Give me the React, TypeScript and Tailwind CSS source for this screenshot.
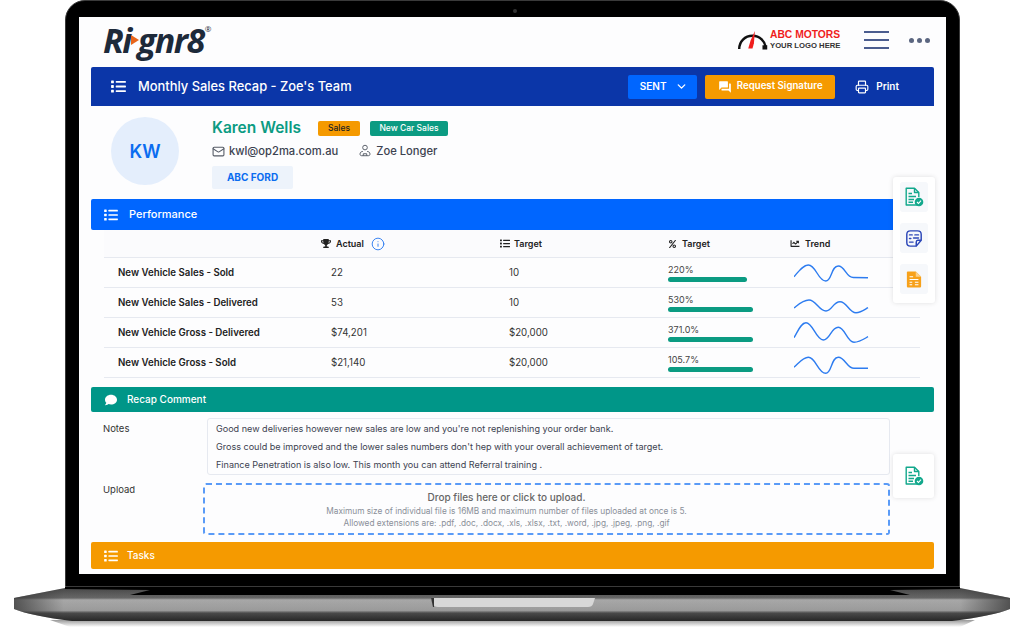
import { ChevronDown, Info, Mail, Printer } from "lucide-react";
import { FaChartLine, FaComment, FaPercent, FaTrophy } from "react-icons/fa";
import { MdForum } from "react-icons/md";

const rows = [
  {
    name: "New Vehicle Sales - Sold",
    actual: "22",
    target: "10",
    pct: "220%",
    bar: "w-[79px]",
    line: "M0 18.7C5 13 9 7 14.3 7C22 7 24 23 31.7 23C38 23 37 8 44.3 8C51 8 52 19.3 59.3 19.5L74 19.7",
  },
  {
    name: "New Vehicle Sales - Delivered",
    actual: "53",
    target: "10",
    pct: "530%",
    bar: "w-[85px]",
    line: "M0 20C5 16 9 12 15 12C22 12 25 23 32 23C38 23 39 13.7 46 13.7C53 13.7 55 24.7 62 24.7C67 24.7 70 22 74 19.7",
  },
  {
    name: "New Vehicle Gross - Delivered",
    actual: "$74,201",
    target: "$20,000",
    pct: "371.0%",
    bar: "w-[85px]",
    line: "M0 19.7C4 13 7 4.7 12 4.7C19 4.7 22 22 29.3 22C36 22 37 9.3 44.3 9.3C51 9.3 53 24.3 60 24.3C65 24.3 70 21 74 18.7",
  },
  {
    name: "New Vehicle Gross - Sold",
    actual: "$21,140",
    target: "$20,000",
    pct: "105.7%",
    bar: "w-[85px]",
    line: "M0 19.3C5 15 9 9.3 14.3 9.3C22 9.3 24 25.3 31.7 25.3C38 25.3 37 9.3 44.3 9.3C51 9.3 53 20.3 60 20.3L74 20.3",
  },
];

function ListIcon({ className }: { className?: string }) {
  return (
    <svg viewBox="0 0 16 14" className={className} fill="currentColor">
      <rect x="0" y="0.5" width="3" height="3" rx="0.6" />
      <rect x="0" y="5.5" width="3" height="3" rx="0.6" />
      <rect x="0" y="10.5" width="3" height="3" rx="0.6" />
      <rect x="5" y="1" width="11" height="2" rx="0.5" />
      <rect x="5" y="6" width="11" height="2" rx="0.5" />
      <rect x="5" y="11" width="11" height="2" rx="0.5" />
    </svg>
  );
}

function DocCheck({ className }: { className?: string }) {
  return (
    <svg viewBox="0 0 20 20" className={className} fill="none" stroke="#12a88c" strokeWidth="1.4">
      <path d="M13 15.5V18H2.2V1.2H10.5L14.8 5.5V10" strokeLinejoin="round" />
      <path d="M10.5 1.2V5.5H14.8" strokeLinejoin="round" />
      <path d="M4.5 6.5H8M4.5 9.5H12M4.5 12.5H10M4.5 15.3H9" />
      <circle cx="15" cy="15" r="4.3" fill="#12a88c" stroke="none" />
      <path d="M13 15L14.5 16.5L17 13.7" stroke="#fff" strokeWidth="1.1" />
    </svg>
  );
}

function NoteIcon() {
  return (
    <svg viewBox="0 0 20 20" className="h-[19px] w-[18px]" fill="none" stroke="#2b46b8" strokeWidth="1.6">
      <path d="M18 12V5.5C18 2.8 16.7 1.5 14 1.5H6C3.3 1.5 2 2.8 2 5.5V14.5C2 17.2 3.3 18.5 6 18.5H12.5L18 12Z" strokeLinejoin="round" />
      <path d="M12.5 18.5V14C12.5 12.8 13 12 14.2 12H18" />
      <path d="M5 6H8M11 6H15M5 10H6.5M9.5 9.5H15M5 14H9" strokeLinecap="round" />
    </svg>
  );
}

function OrangeDoc() {
  return (
    <svg viewBox="0 0 18 20" className="h-[19px] w-[16px]">
      <path d="M2 1H11L17 7V17.5C17 18.5 16.3 19 15.5 19H2.5C1.5 19 1 18.5 1 17.5V2C1 1.3 1.3 1 2 1Z" fill="#f7a11a" />
      <path d="M11 1V7H17Z" fill="#fcd08a" />
      <path d="M4 7H8M4 10H14M4 13H7M10 13H14M4 16H7M10 16H14" stroke="#fff" strokeWidth="1.2" />
    </svg>
  );
}

function ManagerIcon() {
  return (
    <svg viewBox="0 0 14 16" className="h-[14px] w-[12px]" fill="none" stroke="#555b66" strokeWidth="1.1">
      <circle cx="7" cy="4" r="2.7" />
      <path d="M4.5 8.5C2.5 8.5 1.2 9.8 1.2 11.5C1.2 13 2 13.5 3 13.5H11C12 13.5 12.8 13 12.8 11.5C12.8 9.8 11.5 8.5 9.5 8.5" />
      <path d="M5 13.5V11.2H9V13.5" />
    </svg>
  );
}

function SectionBar({
  color,
  icon,
  title,
  h,
  titleClass,
}: {
  color: string;
  icon: React.ReactNode;
  title: string;
  h: string;
  titleClass: string;
}) {
  return (
    <div className={`flex items-center rounded-[2px] pl-[13px] text-white ${color} ${h}`}>
      {icon}
      <span className={`font-medium ${titleClass}`}>{title}</span>
    </div>
  );
}

function LaptopBase() {
  return (
    <svg viewBox="0 0 1024 43" className="h-[43px] w-[1024px] shrink-0">
      <defs>
        <linearGradient id="body" x1="0" y1="0" x2="0" y2="1">
          <stop offset="0" stopColor="#4a4a4a" />
          <stop offset="0.3" stopColor="#6c6c6c" />
          <stop offset="0.36" stopColor="#b4b4b4" />
          <stop offset="0.68" stopColor="#a6a6a6" />
          <stop offset="0.76" stopColor="#4c4c4c" />
          <stop offset="1" stopColor="#262626" />
        </linearGradient>
        <linearGradient id="ends" x1="0" y1="0" x2="1" y2="0">
          <stop offset="0" stopColor="#333" stopOpacity="0.75" />
          <stop offset="0.05" stopColor="#333" stopOpacity="0.1" />
          <stop offset="0.95" stopColor="#333" stopOpacity="0.1" />
          <stop offset="1" stopColor="#333" stopOpacity="0.75" />
        </linearGradient>
        <linearGradient id="shadow" x1="0" y1="0" x2="0" y2="1">
          <stop offset="0" stopColor="#999" />
          <stop offset="1" stopColor="#fff" />
        </linearGradient>
      </defs>
      <path d="M50 33H975L960 40H70Z" fill="url(#shadow)" />
      <path d="M65 1L14 11V22Q32 29 72 34H952Q992 29 1010 22V11L960 1Z" fill="url(#body)" />
      <path d="M65 1L14 11V22Q32 29 72 34H952Q992 29 1010 22V11L960 1Z" fill="url(#ends)" />
      <path d="M65 0H960V2L890 3L910 8H130L150 3L65 2Z" fill="#000" />
      <path d="M431 11H595L593 17Q592 20 588 20H438Q434 20 433 17Z" fill="#d8d8d8" />
      <path d="M431 11H434V20H433Z" fill="#333" />
    </svg>
  );
}

export default function App() {
  return (
    <div className="flex h-[629px] w-[1024px] flex-col overflow-hidden bg-white font-['Inter',sans-serif]">
      <div className="relative ml-[65px] h-[587px] w-[895px] shrink-0 rounded-t-[20px] border border-[#3a3a3a] bg-black px-[13px] pt-[16px]">
        <div className="absolute left-[447px] top-[8px] h-[4px] w-[4px] rounded-full bg-[#333]" />
        <div className="relative h-[557px] w-[867px] bg-[#fdfdfe] px-[12px]">
          {/* top header */}
          <div className="flex h-[50px] items-center justify-between pb-[4px]">
            <div className="relative ml-[12px] flex items-start font-['Open_Sans',sans-serif] text-[34px] font-bold italic leading-none tracking-[-1.5px] text-[#1d2a3a]">
              <span>Ri</span>
              <span className="mt-[12px] h-0 w-0 border-y-[5px] border-l-[8px] border-y-transparent border-l-[#e8651a]" />
              <span className="-ml-[1px]">gnr8</span>
              <span className="ml-[1px] mt-[2px] text-[8px] font-normal not-italic">®</span>
            </div>
            <div className="flex items-center">
              <svg viewBox="0 0 32 20" className="h-[19px] w-[31px]">
                <path d="M2 19C2 11 8 5 16 5C24 5 29 11 30 17" fill="none" stroke="#111" strokeWidth="2.6" />
                <rect x="26.5" y="15" width="5" height="4.5" fill="#111" />
                <path d="M18.5 0L17.5 13L16 18.5L11.5 18.5L14 10Z" fill="#f01d1d" />
              </svg>
              <div className="ml-[2px] flex w-[73px] flex-col whitespace-nowrap font-['Liberation_Sans',sans-serif] font-bold leading-[11px]">
                <span className="text-[10.3px] text-[#f01d1d]">ABC MOTORS</span>
                <span className="text-[7.7px] text-[#333]">YOUR LOGO HERE</span>
              </div>
              <div className="ml-[21px] flex h-[18px] w-[25px] flex-col justify-between">
                <div className="h-[2px] bg-[#4b5d8f]" />
                <div className="h-[2px] bg-[#4b5d8f]" />
                <div className="h-[2px] bg-[#4b5d8f]" />
              </div>
              <div className="ml-[20px] mr-[4px] flex gap-[3px]">
                <div className="h-[5px] w-[5px] rounded-full bg-[#5b6680]" />
                <div className="h-[5px] w-[5px] rounded-full bg-[#5b6680]" />
                <div className="h-[5px] w-[5px] rounded-full bg-[#5b6680]" />
              </div>
            </div>
          </div>

          {/* title bar */}
          <div className="flex h-[39px] items-center rounded-t-[2px] bg-[#0b36a8] pl-[20px] text-white">
            <ListIcon className="h-[13px] w-[15px]" />
            <span className="ml-[12px] text-[12.9px] font-medium">Monthly Sales Recap - Zoe's Team</span>
            <div className="ml-auto flex h-[24px] w-[69px] items-center justify-center gap-[8px] rounded-[2px] bg-[#0066ff] pl-[2px] text-[10px] font-semibold">
              SENT
              <ChevronDown className="h-[13px] w-[13px]" strokeWidth={2.5} />
            </div>
            <div className="ml-[8px] flex h-[24px] w-[130px] items-center justify-center gap-[5px] rounded-[2px] bg-[#f59a00] text-[9.7px] font-semibold">
              <MdForum className="h-[14px] w-[14px]" />
              Request Signature
            </div>
            <div className="ml-[20px] mr-[35px] flex items-center gap-[7px] text-[10px] font-semibold">
              <Printer className="h-[14px] w-[14px]" />
              Print
            </div>
          </div>

          {/* profile */}
          <div className="flex h-[93px] pl-[20px] pt-[11px]">
            <div className="flex h-[68px] w-[68px] items-center justify-center rounded-full bg-[#e4eefc] text-[18px] font-semibold text-[#0a6cf0]">
              KW
            </div>
            <div className="ml-[33px] flex flex-col">
              <div className="flex h-[22px] items-center">
                <span className="text-[15.5px] font-semibold text-[#0b9b82]">Karen Wells</span>
                <span className="ml-[17px] flex h-[15px] w-[42px] items-center justify-center rounded-[2px] bg-[#f59a00] text-[8.5px] font-medium text-[#222]">
                  Sales
                </span>
                <span className="ml-[10px] flex h-[15px] w-[78px] items-center justify-center rounded-[2px] bg-[#0b9b82] text-[8.5px] font-medium text-white">
                  New Car Sales
                </span>
              </div>
              <div className="mt-[1px] flex h-[22px] items-center text-[11.2px] font-medium text-[#3c4250]">
                <Mail className="h-[13px] w-[13px] text-[#555b66]" />
                <span className="ml-[4px]">kwl@op2ma.com.au</span>
                <span className="ml-[21px]">
                  <ManagerIcon />
                </span>
                <span className="ml-[5px]">Zoe Longer</span>
              </div>
              <div className="mt-[4px] flex h-[23px] w-[81px] items-center justify-center rounded-[2px] bg-[#edf3fb] text-[10px] font-bold text-[#0a6cf0]">
                ABC FORD
              </div>
            </div>
          </div>

          {/* performance */}
          <SectionBar
            color="bg-[#0066ff]"
            h="h-[31px]"
            titleClass="ml-[11px] text-[11px]"
            icon={<ListIcon className="h-[12px] w-[14px]" />}
            title="Performance"
          />
          <div className="ml-[13px] mr-[14px]">
            <div className="grid h-[28px] grid-cols-[227px_178px_159px_122px_1fr] items-center border-b border-[#e6e9f0] bg-[#fbfbfd] text-[9px] font-semibold text-[#222]">
              <div />
              <div className="-ml-[10px] flex items-center gap-[5px]">
                <FaTrophy className="h-[9px] w-[10px]" />
                Actual
                <Info className="ml-[2px] h-[14px] w-[14px] text-[#2d7cf0]" strokeWidth={1.6} />
              </div>
              <div className="-ml-[9px] flex items-center gap-[4px]">
                <ListIcon className="h-[9px] w-[10px]" />
                Target
              </div>
              <div className="flex items-center gap-[5px]">
                <FaPercent className="h-[8px] w-[9px]" />
                Target
              </div>
              <div className="flex items-center gap-[5px]">
                <FaChartLine className="h-[9px] w-[10px]" />
                Trend
              </div>
            </div>
            {rows.map((r) => (
              <div
                key={r.name}
                className="grid h-[30px] grid-cols-[227px_178px_159px_122px_1fr] items-center border-b border-[#e6e9f0] text-[9.7px] text-[#333]"
              >
                <div className="pl-[14px] pt-[1px] font-semibold text-[#222]">{r.name}</div>
                <div className="pt-[1px]">{r.actual}</div>
                <div className="pt-[1px]">{r.target}</div>
                <div>
                  <div className="text-[9px] leading-[12px] text-[#444]">{r.pct}</div>
                  <div className={`mt-[1px] h-[5px] rounded-full bg-[#0b9b82] ${r.bar}`} />
                </div>
                <div className="pl-[4px]">
                  <svg viewBox="0 0 75 30" className="h-[30px] w-[75px]" fill="none" stroke="#2d7cf0" strokeWidth="1.4">
                    <path d={r.line} />
                  </svg>
                </div>
              </div>
            ))}
          </div>

          {/* recap comment */}
          <div className="mt-[9px]">
            <SectionBar
              color="bg-[#009688]"
              h="h-[25px]"
              titleClass="ml-[9px] text-[10px]"
              icon={<FaComment className="h-[12px] w-[14px]" />}
              title="Recap Comment"
            />
          </div>
          <div className="mt-[6px] flex">
            <div className="w-[116px] pl-[12px] pt-[4px] text-[9.5px] text-[#333]">Notes</div>
            <div className="flex h-[57px] w-[683px] flex-col justify-center gap-[6px] rounded-[3px] border border-[#e6e9f0] pl-[8px] text-[9.05px] leading-[12px] text-[#3c4250]">
              <p>Good new deliveries however new sales are low and you're not replenishing your order bank.</p>
              <p>Gross could be improved and the lower sales numbers don't hep with your overall achievement of target.</p>
              <p>Finance Penetration is also low. This month you can attend Referral training .</p>
            </div>
          </div>
          <div className="mt-[8px] flex">
            <div className="w-[112px] pl-[12px] text-[9.5px] text-[#333]">Upload</div>
            <div className="flex h-[52px] w-[687px] flex-col items-center justify-center rounded-[3px] border-2 border-dashed border-[#5a9bf7] pr-[80px] text-center">
              <div className="text-[10px] font-medium leading-[14px] text-[#666]">Drop files here or click to upload.</div>
              <div className="mt-[1px] text-[8.3px] leading-[12px] text-[#8a8f99]">
                Maximum size of individual file is 16MB and maximum number of files uploaded at once is 5.
              </div>
              <div className="text-[8.3px] leading-[12px] text-[#8a8f99]">
                Allowed extensions are: .pdf, .doc, .docx, .xls, .xlsx, .txt, .word, .jpg, .jpeg, .png, .gif
              </div>
            </div>
          </div>
          <div className="mt-[7px]">
            <SectionBar
              color="bg-[#f59a00]"
              h="h-[27px]"
              titleClass="ml-[9px] text-[10px]"
              icon={<ListIcon className="h-[12px] w-[14px]" />}
              title="Tasks"
            />
          </div>

          {/* floating panels */}
          <div className="absolute left-[814px] top-[160px] flex h-[126px] w-[42px] flex-col items-center gap-[11px] rounded-[3px] bg-white pt-[5px] shadow-[0_0_5px_rgba(0,0,0,0.12)]">
            <div className="flex h-[30px] w-[28px] items-center justify-center rounded-[3px] bg-[#f6f8fb]">
              <DocCheck className="h-[20px] w-[20px]" />
            </div>
            <div className="flex h-[30px] w-[28px] items-center justify-center rounded-[3px] bg-[#f6f8fb]">
              <NoteIcon />
            </div>
            <div className="flex h-[30px] w-[28px] items-center justify-center rounded-[3px] bg-[#f6f8fb]">
              <OrangeDoc />
            </div>
          </div>
          <div className="absolute left-[814px] top-[437px] flex h-[44px] w-[41px] items-center justify-center rounded-[3px] bg-white shadow-[0_0_5px_rgba(0,0,0,0.12)]">
            <DocCheck className="h-[20px] w-[20px]" />
          </div>
        </div>
      </div>
      <LaptopBase />
    </div>
  );
}
